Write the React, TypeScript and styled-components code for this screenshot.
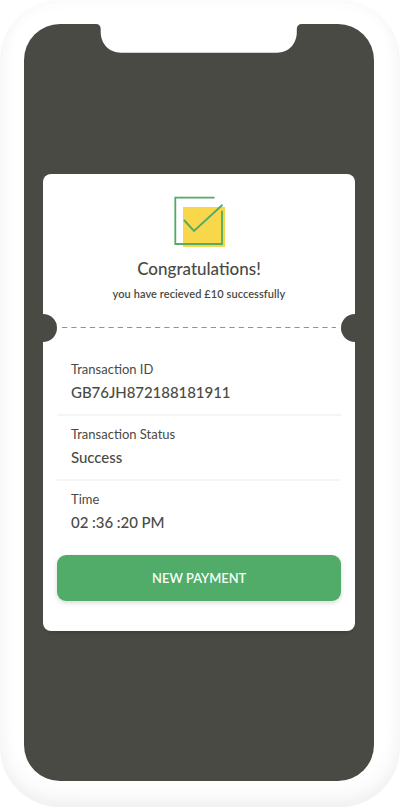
import React from "react";
import styled, { createGlobalStyle } from "styled-components";

const ink = "#4a4a45";
const slate = "#494a44";
const green = "#50ac68";

const GlobalStyle = createGlobalStyle`
  * { box-sizing: border-box; }
  body { margin: 0; background: #fff; }
`;

const Phone = styled.main`
  width: 400px;
  height: 807px;
  padding: 24px 26px 26.5px 24px;
  border-radius: 60px;
  background: #fff;
  box-shadow: inset 0 0 18px rgba(40, 50, 45, 0.03), inset 0 -12px 24px -6px rgba(60, 70, 100, 0.08);
  font-family: Lato, "Liberation Sans", sans-serif;
  color: ${ink};
`;

const Screen = styled.div`
  position: relative;
  height: 100%;
  padding: 150px 19px 0;
  border-radius: 36px;
  background: ${slate};
`;

const Notch = styled.svg`
  position: absolute;
  top: -1px;
  left: 72px;
  display: block;
`;

const Card = styled.section`
  display: flex;
  flex-direction: column;
  height: 456.5px;
  border-radius: 8px;
  background: #fff;
  box-shadow: 0 4px 4px -3px rgba(0, 0, 0, 0.2);
`;

const Header = styled.header`
  display: flex;
  flex-direction: column;
  align-items: center;
  height: 140px;
  padding-top: 19px;
`;

const Title = styled.h1`
  margin: 11px 0 0;
  font-size: 17px;
  line-height: 22px;
  font-weight: 500;
  white-space: nowrap;
`;

const Subtitle = styled.p`
  margin: 7px 0 0;
  font-size: 11px;
  line-height: 14px;
  font-weight: 600;
  letter-spacing: 0.08px;
  white-space: nowrap;
`;

const Perforation = styled.div`
  display: flex;
  align-items: center;
  justify-content: space-between;
  height: 28px;
`;

const Cutout = styled.span<{ $side: "left" | "right" }>`
  width: 14px;
  height: 28px;
  background: ${slate};
  border-radius: ${({ $side }) => ($side === "left" ? "0 14px 14px 0" : "14px 0 0 14px")};
`;

const Dashes = styled.svg`
  display: block;
  width: 276px;
  height: 2px;
`;

const Details = styled.dl`
  margin: 0;
  padding: 9px 14px 0;
`;

const Row = styled.div`
  height: 65px;
  padding: 9px 14px 0;
  border-bottom: 2px solid #f5f5f5;
  &:last-child { border-bottom-color: transparent; }
`;

const Label = styled.dt`
  font-size: 13px;
  line-height: 18px;
`;

const Value = styled.dd`
  margin: 4px 0 0;
  font-size: 15px;
  line-height: 20px;
  font-weight: 500;
  letter-spacing: -0.05px;
`;

const PayButton = styled.button`
  height: 46.5px;
  margin: 8.7px 14px 0;
  padding: 0;
  border: 0;
  border-radius: 9px;
  background: ${green};
  box-shadow: 0 2px 5px rgba(0, 0, 0, 0.15);
  color: #f8fff9;
  font: 600 14px/20px Lato, "Liberation Sans", sans-serif;
`;

const PayLabel = styled.span`
  display: inline-block;
  transform: scaleX(0.92);
`;

const details = [
  { label: "Transaction ID", value: "GB76JH872188181911" },
  { label: "Transaction Status", value: "Success" },
  { label: "Time", value: "02 :36 :20 PM" },
];

const CheckIcon = () => (
  <svg width="54" height="54" viewBox="0 0 54 54" fill="none" aria-hidden="true">
    <path d="M11 14H53V55H11z" fill="#f8d74a" />
    <path d="M41.8 4.7H3.3V51H50V18.5" stroke={green} strokeWidth="1.8" strokeLinecap="round" />
    <path d="M12.4 27.5L22 38L50 12.3" stroke={green} strokeWidth="1.9" strokeLinecap="round" />
  </svg>
);

export default function App() {
  return (
    <>
      <GlobalStyle />
      <Phone>
        <Screen>
          <Notch width="206" height="30" viewBox="0 0 206 30" aria-hidden="true">
            <path d="M0 0V1C3.2 1 4.7 3 4.7 6V9C4.7 20.5 13 29.7 25 29.7H181C193 29.7 200.8 20.5 200.8 9V6C200.8 3 202.5 1 206 1V0Z" fill="#fff" />
          </Notch>
          <Card>
            <Header>
              <CheckIcon />
              <Title>Congratulations!</Title>
              <Subtitle>you have recieved £10 successfully</Subtitle>
            </Header>
            <Perforation>
              <Cutout $side="left" />
              <Dashes aria-hidden="true">
                <path d="M1 .5H275" stroke="#92928e" strokeDasharray="5.2 4.1" />
              </Dashes>
              <Cutout $side="right" />
            </Perforation>
            <Details>
              {details.map(({ label, value }) => (
                <Row key={label}>
                  <Label>{label}</Label>
                  <Value>{value}</Value>
                </Row>
              ))}
            </Details>
            <PayButton type="button"><PayLabel>NEW PAYMENT</PayLabel></PayButton>
          </Card>
        </Screen>
      </Phone>
    </>
  );
}
